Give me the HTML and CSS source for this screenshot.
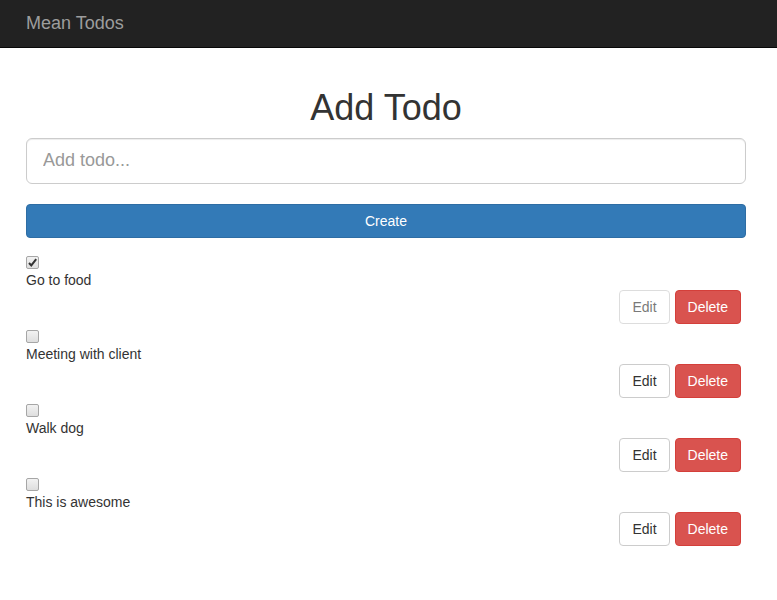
FILE: index.html
```html
<!DOCTYPE html>
<html lang="en">
<head>
<meta charset="utf-8">
<title>Mean Todos</title>
<link rel="stylesheet" href="styles.css">
</head>
<body>
<nav class="navbar">
  <div class="container">
    <a class="brand" href="#">Mean Todos</a>
  </div>
</nav>
<main class="container">
  <h1 class="title">Add Todo</h1>
  <form class="add-form">
    <input class="todo-input" type="text" placeholder="Add todo...">
    <button class="btn btn-primary btn-block" type="button">Create</button>
  </form>
  <div class="todo-list">
    <div class="todo">
      <input class="check" type="checkbox" checked>
      <div class="todo-text">Go to food</div>
      <div class="actions">
        <button class="btn btn-default" type="button" disabled>Edit</button>
        <button class="btn btn-danger" type="button">Delete</button>
      </div>
    </div>
    <div class="todo">
      <input class="check" type="checkbox">
      <div class="todo-text">Meeting with client</div>
      <div class="actions">
        <button class="btn btn-default" type="button">Edit</button>
        <button class="btn btn-danger" type="button">Delete</button>
      </div>
    </div>
    <div class="todo">
      <input class="check" type="checkbox">
      <div class="todo-text">Walk dog</div>
      <div class="actions">
        <button class="btn btn-default" type="button">Edit</button>
        <button class="btn btn-danger" type="button">Delete</button>
      </div>
    </div>
    <div class="todo">
      <input class="check" type="checkbox">
      <div class="todo-text">This is awesome</div>
      <div class="actions">
        <button class="btn btn-default" type="button">Edit</button>
        <button class="btn btn-danger" type="button">Delete</button>
      </div>
    </div>
  </div>
</main>
</body>
</html>
```
FILE: styles.css
```css
* { box-sizing: border-box; }
html, body { margin: 0; padding: 0; }
body {
  font-family: "Liberation Sans", Arial, Helvetica, sans-serif;
  font-size: 14px;
  line-height: 20px;
  color: #333;
  background: #fff;
}
.container {
  width: 720px;
  margin-left: 26px;
}
.navbar {
  background: #222;
  border-bottom: 1px solid #080808;
  height: 48px;
}
.brand {
  display: inline-block;
  font-size: 18px;
  line-height: 20px;
  padding: 13px 0 14px;
  color: #9d9d9d;
  text-decoration: none;
}
.title {
  margin: 40px 0 10px;
  font-size: 36px;
  font-weight: 500;
  line-height: 1.1;
  text-align: center;
  color: #333;
}
.add-form {
  display: flex;
  flex-direction: column;
  gap: 20px;
}
.todo-input {
  display: block;
  width: 100%;
  height: 46px;
  padding: 10px 16px;
  font-family: inherit;
  font-size: 18px;
  line-height: 1.33;
  color: #555;
  border: 1px solid #ccc;
  border-radius: 6px;
  box-shadow: inset 0 1px 1px rgba(0,0,0,.075);
  outline: none;
}
.todo-input::placeholder { color: #999; }
.btn {
  display: inline-block;
  padding: 6px 12px;
  font-family: inherit;
  font-size: 14px;
  line-height: 20px;
  border: 1px solid transparent;
  border-radius: 4px;
  cursor: pointer;
  text-align: center;
}
.btn-block { display: block; width: 100%; }
.btn-primary {
  background: #337ab7;
  border-color: #2e6da4;
  color: #fff;
}
.btn-default {
  background: #fff;
  border-color: #ccc;
  color: #333;
}
.btn-default:disabled {
  opacity: .65;
  cursor: not-allowed;
}
.btn-danger {
  background: #d9534f;
  border-color: #d43f3a;
  color: #fff;
}
.todo-list {
  margin-top: 18px;
}
.todo {
  margin-bottom: 6px;
}
.check {
  -webkit-appearance: none;
  appearance: none;
  display: block;
  width: 13px;
  height: 13px;
  margin: 0 0 1px;
  border: 1px solid #a6a6a6;
  border-radius: 2px;
  background: linear-gradient(#f2f2f2, #dedede);
}
.check:checked {
  background: url("data:image/svg+xml;utf8,<svg xmlns='http://www.w3.org/2000/svg' width='11' height='11' viewBox='0 0 11 11'><path d='M2 6 L4.3 8.4 L9.2 2.2' fill='none' stroke='%23333' stroke-width='2'/></svg>") center/11px 11px no-repeat, linear-gradient(#f2f2f2, #dedede);
}
.todo-text {
  line-height: 20px;
}
.actions {
  display: flex;
  justify-content: flex-end;
  gap: 5px;
  padding-right: 5px;
}
```
